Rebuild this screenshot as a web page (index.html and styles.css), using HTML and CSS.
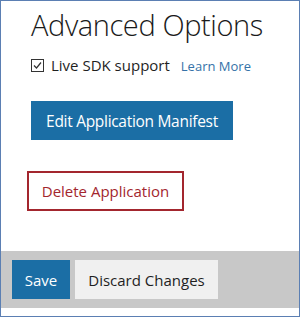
FILE: index.html
```html
<!DOCTYPE html>
<html lang="en">
<head>
    <meta charset="UTF-8">
    <title>Advanced Options</title>
    <link rel="stylesheet" href="styles.css">
</head>
<body>
    <div class="frame">
        <div class="options">
            <h1 class="title">Advanced Options</h1>
            <div class="sdk-row">
                <span class="check-box">
                    <svg width="11" height="11" viewBox="0 0 11 11" fill="none" stroke="#333" stroke-width="1.2">
                        <path d="M2 5.5 L4.5 8 L9 2.5"></path>
                    </svg>
                </span>
                <span class="sdk-label">Live SDK support</span>
                <a class="learn-more" href="#">Learn More</a>
            </div>
            <button class="btn btn-primary edit-button">Edit Application Manifest</button>
            <button class="btn delete-button">Delete Application</button>
        </div>
        <div class="footer">
            <button class="btn btn-primary">Save</button>
            <button class="btn btn-light">Discard Changes</button>
        </div>
    </div>
</body>
</html>
```

FILE: styles.css
```css
body {
    margin: 0;
    font-family: 'Open Sans', 'Noto Sans', sans-serif;
    color: #1F1F1F;
    background-color: #FFFFFF;
}
.frame {
    width: 298px;
    height: 315px;
    border: 1px solid #5B7FB3;
    display: flex;
    flex-direction: column;
}
.options {
    padding: 0 0 0 30px;
    flex: 1;
    display: flex;
    flex-direction: column;
    align-items: flex-start;
}
.title {
    font-weight: 300;
    font-size: 29px;
    letter-spacing: -0.4px;
    line-height: 40px;
    margin: 4px 0 0 0;
    color: #1A1A1A;
}
.sdk-row {
    display: flex;
    align-items: center;
    margin-top: 10px;
    height: 20px;
}
.check-box {
    width: 11px;
    height: 11px;
    border: 1px solid #333333;
    display: flex;
    align-items: center;
    justify-content: center;
    margin-right: 7px;
}
.sdk-label {
    font-size: 15px;
}
.learn-more {
    font-size: 13px;
    color: #3572A8;
    text-decoration: none;
    margin-left: 11px;
    margin-top: 2px;
}
.btn {
    font-family: 'Open Sans', 'Noto Sans', sans-serif;
    font-size: 15px;
    height: 39px;
    border: none;
    padding: 0 12px;
    white-space: nowrap;
    cursor: pointer;
}
.btn-primary {
    background-color: #1B6EA5;
    color: #FFFFFF;
}
.edit-button {
    margin-top: 26px;
    width: 202px;
    font-size: 15.5px;
    letter-spacing: -0.3px;
}
.delete-button {
    margin: 31px 0 0 -4px;
    width: 157px;
    height: 40px;
    background-color: #FFFFFF;
    border: 2px solid #A3262E;
    color: #A3262E;
}
.footer {
    background-color: #C8C8C8;
    padding: 9px 11px 9px;
    margin-bottom: 8px;
    display: flex;
    gap: 5px;
}
.footer .btn-primary {
    width: 58px;
}
.btn-light {
    width: 143px;
    background-color: #F0F0F0;
    color: #1F1F1F;
}
```
